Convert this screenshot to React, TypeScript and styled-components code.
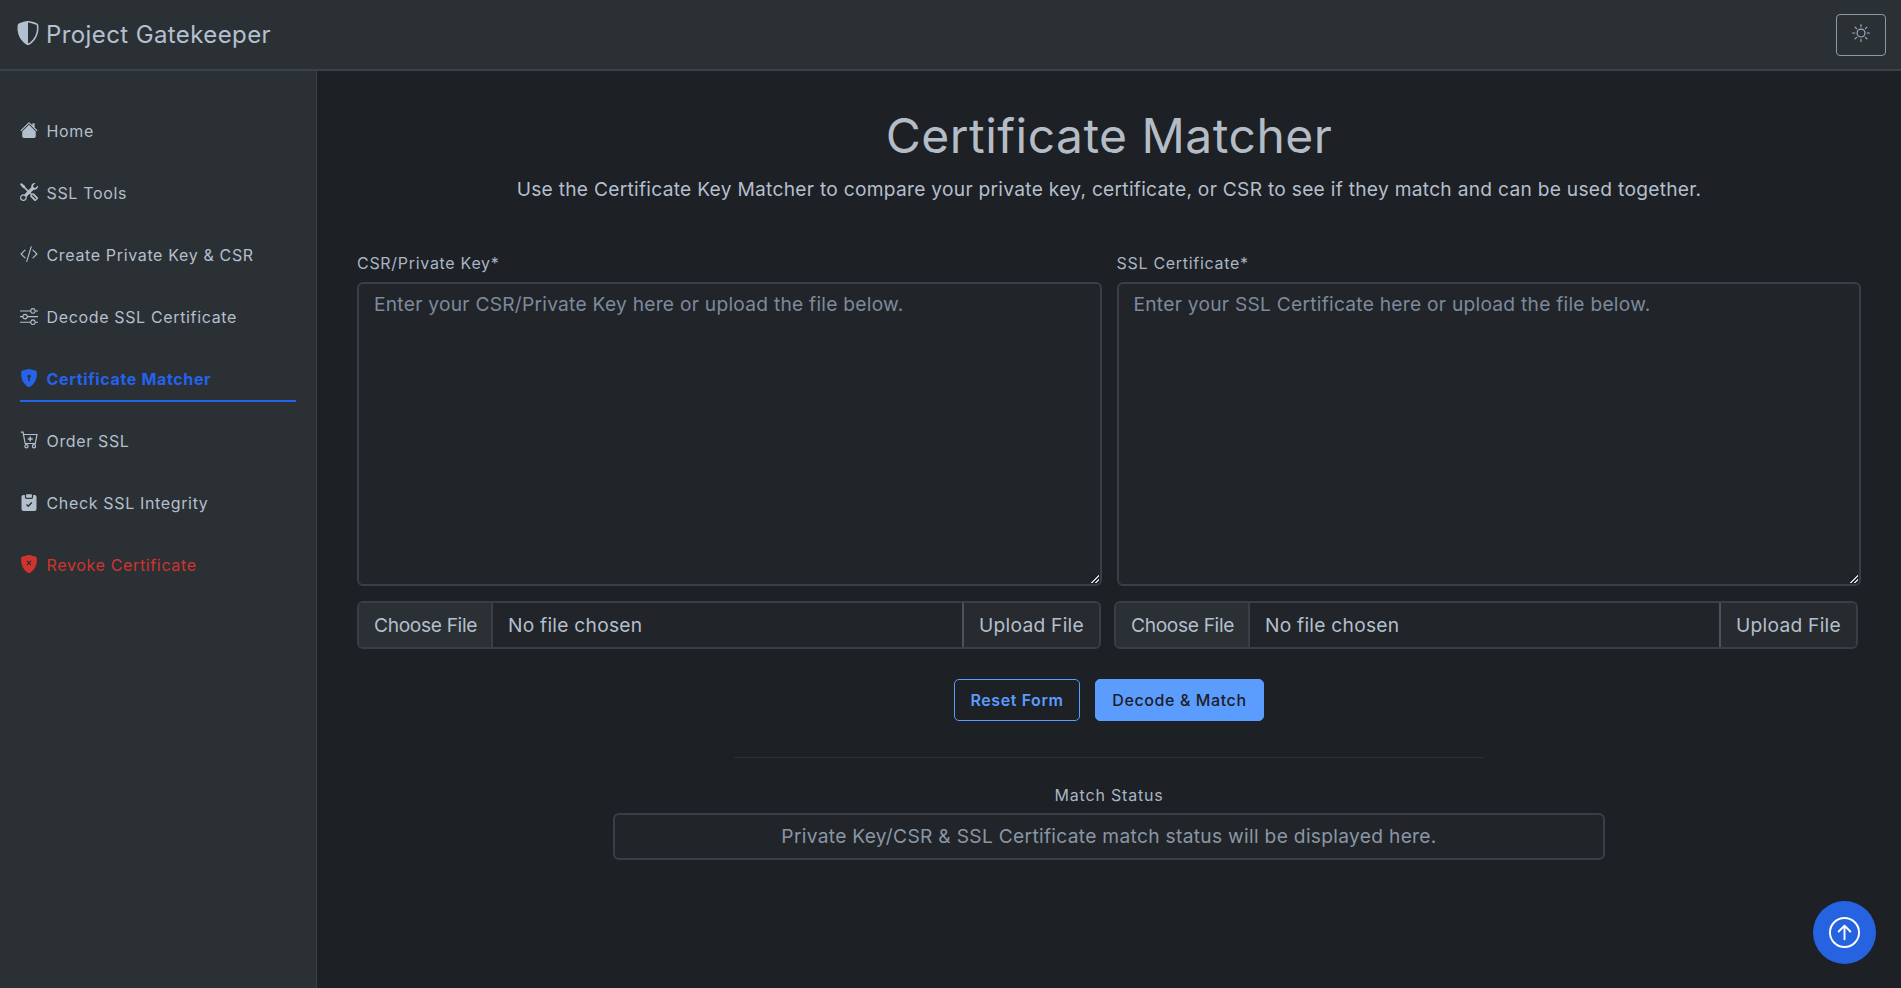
import styled, { createGlobalStyle } from 'styled-components';
import {
  BsArrowUpCircle,
  BsCodeSlash,
  BsHouseFill,
  BsShieldFillX,
  BsShieldLockFill,
  BsShieldShaded,
  BsSliders,
  BsSun,
  BsTools,
} from 'react-icons/bs';

const GlobalStyle = createGlobalStyle`
  * { box-sizing: border-box; }
  html, body { margin: 0; height: 100%; overflow: hidden; }
  html { color-scheme: dark; }
  body {
    background: #1d2024;
    color: #b4bfcc;
    font-family: "Inter", "Liberation Sans", sans-serif;
    font-size: 16px;
  }
`;

const CartIcon = () => (
  <svg viewBox="0 0 18 18" fill="none" stroke="currentColor" strokeWidth="1.2">
    <path d="M0.8 1.2H3L5.2 12.5H15.3L17 3.5H3.5" />
    <path d="M10.2 5.5V10.5M7.7 8H12.7" strokeWidth="1.4" />
    <circle cx="6.5" cy="15.2" r="1.6" />
    <circle cx="14" cy="15.2" r="1.6" />
  </svg>
);

const ClipboardIcon = () => (
  <svg viewBox="0 0 18 18" fill="currentColor">
    <rect x="1.5" y="2" width="15" height="16" rx="2" />
    <rect x="5.5" y="0.7" width="7" height="4.6" rx="1" stroke="#2b3035" strokeWidth="1.2" />
    <path d="M6.5 11.5L8.3 13.2L11.8 9.5" fill="none" stroke="#2b3035" strokeWidth="1.4" />
  </svg>
);

const navItems = [
  { label: 'Home', icon: <BsHouseFill /> },
  { label: 'SSL Tools', icon: <BsTools /> },
  { label: 'Create Private Key & CSR', icon: <BsCodeSlash /> },
  { label: 'Decode SSL Certificate', icon: <BsSliders /> },
  { label: 'Certificate Matcher', icon: <BsShieldLockFill />, tone: 'active' },
  { label: 'Order SSL', icon: <CartIcon /> },
  { label: 'Check SSL Integrity', icon: <ClipboardIcon /> },
  { label: 'Revoke Certificate', icon: <BsShieldFillX />, tone: 'danger' },
];

const App = () => {
  return (
    <Page>
      <GlobalStyle />
      <Header>
        <Brand>
          <BsShieldShaded />
          <span>Project Gatekeeper</span>
        </Brand>
        <ThemeButton aria-label="Toggle theme">
          <BsSun />
        </ThemeButton>
      </Header>
      <Body>
        <Sidebar>
          {navItems.map((item) => (
            <NavItem key={item.label} $tone={item.tone}>
              {item.icon}
              <span>{item.label}</span>
            </NavItem>
          ))}
        </Sidebar>
        <Main>
          <Title>Certificate Matcher</Title>
          <Lead>
            Use the Certificate Key Matcher to compare your private key, certificate, or CSR to see if they match and can be used together.
          </Lead>
          <Fields>
            <Field>
              <Label htmlFor="csr">CSR/Private Key*</Label>
              <TextArea id="csr" placeholder="Enter your CSR/Private Key here or upload the file below." />
            </Field>
            <Field>
              <Label htmlFor="cert">SSL Certificate*</Label>
              <TextArea id="cert" placeholder="Enter your SSL Certificate here or upload the file below." />
            </Field>
          </Fields>
          <UploadRows>
            <UploadGroup>
              <ChooseButton>Choose File</ChooseButton>
              <FileName>No file chosen</FileName>
              <UploadButton>Upload File</UploadButton>
            </UploadGroup>
            <UploadGroup>
              <ChooseButton>Choose File</ChooseButton>
              <FileName>No file chosen</FileName>
              <UploadButton>Upload File</UploadButton>
            </UploadGroup>
          </UploadRows>
          <Actions>
            <ResetButton>Reset Form</ResetButton>
            <SubmitButton>Decode &amp; Match</SubmitButton>
          </Actions>
          <Divider />
          <StatusLabel>Match Status</StatusLabel>
          <StatusBox>Private Key/CSR &amp; SSL Certificate match status will be displayed here.</StatusBox>
        </Main>
      </Body>
      <ScrollTop aria-label="Scroll to top">
        <BsArrowUpCircle />
      </ScrollTop>
    </Page>
  );
};
export default App;

const Page = styled.div`
  height: 100vh;
  display: flex;
  flex-direction: column;
`;

const Header = styled.header`
  height: 71px;
  flex: none;
  display: flex;
  align-items: center;
  justify-content: space-between;
  padding: 0 15px 0 16px;
  background: #2b3035;
  border-bottom: 2px solid #3a4147;
`;

const Brand = styled.div`
  display: flex;
  align-items: center;
  gap: 6px;
  font-size: 24px;
  letter-spacing: 0.4px;
  color: #b4c0d0;
  svg { width: 24px; height: 24px; margin-top: -3px; }
`;

const ThemeButton = styled.button`
  width: 50px;
  height: 42px;
  padding: 0;
  display: flex;
  align-items: center;
  justify-content: center;
  background: transparent;
  border: 1px solid #8d99a8;
  border-radius: 4px;
  color: #9fb0c4;
  svg { width: 18px; height: 18px; margin-top: -3px; }
`;

const Body = styled.div`
  flex: 1;
  display: flex;
  min-height: 0;
`;

const Sidebar = styled.nav`
  width: 317px;
  flex: none;
  padding: 41px 20px 0 20px;
  background: #2b3035;
  border-right: 1px solid #3a4147;
  display: flex;
  flex-direction: column;
  gap: 20px;
`;

const NavItem = styled.a<{ $tone?: string }>`
  height: 42px;
  display: flex;
  align-items: center;
  gap: 8.5px;
  font-size: 16px;
  letter-spacing: 0.65px;
  padding-bottom: 2px;
  color: ${(p) => (p.$tone === 'active' ? '#2563eb' : p.$tone === 'danger' ? '#d0342c' : '#b4bfcc')};
  font-weight: ${(p) => (p.$tone === 'active' ? 700 : 400)};
  border-bottom: 2px solid ${(p) => (p.$tone === 'active' ? '#2563eb' : 'transparent')};
  svg { width: 18px; height: 18px; flex: none; margin-top: -3px; }
`;

const Main = styled.main`
  flex: 1;
  padding: 36px 40px 0 40px;
  display: flex;
  flex-direction: column;
  align-items: center;
`;

const Title = styled.h1`
  margin: 0;
  font-size: 48px;
  line-height: 58px;
  font-weight: 400;
  letter-spacing: 0.47px;
  color: #b4bcc6;
`;

const Lead = styled.p`
  margin: 10px 0 0;
  font-size: 19.2px;
  line-height: 29px;
  letter-spacing: 0.27px;
  color: #b4bfcc;
`;

const Fields = styled.div`
  width: 100%;
  margin-top: 47px;
  display: grid;
  grid-template-columns: 1fr 1fr;
  gap: 15px;
`;

const Field = styled.div`
  display: flex;
  flex-direction: column;
`;

const Label = styled.label`
  font-size: 16px;
  line-height: 24px;
  letter-spacing: 0.7px;
  margin-bottom: 7px;
  color: #a9b5c4;
`;

const TextArea = styled.textarea`
  display: block;
  width: 100%;
  height: 304px;
  padding: 6px 15px;
  font: inherit;
  font-size: 19.2px;
  line-height: 29px;
  letter-spacing: 0.25px;
  color: #b4bfcc;
  background: #212529;
  border: 2px solid #383f46;
  border-radius: 6px;
  outline: none;
  &::placeholder { color: #7d8a9c; opacity: 1; }
  &::-webkit-resizer {
    background: linear-gradient(135deg, #1d2024 44%, #d0d4d8 44% 58%, #1d2024 58% 72%, #d0d4d8 72% 86%, #1d2024 86%) right 1px bottom 1px / 8px 8px no-repeat;
  }
`;

const UploadRows = styled.div`
  width: 100%;
  margin-top: 15px;
  display: flex;
  gap: 13px;
`;

const UploadGroup = styled.div`
  width: 744px;
  height: 48px;
  display: flex;
  align-items: stretch;
  font-size: 19.2px;
  letter-spacing: 0.25px;
  color: #b4bfcc;
  background: #212529;
  border: 2px solid #383f46;
  border-radius: 6px;
`;

const ChooseButton = styled.div`
  display: flex;
  align-items: center;
  padding: 0 15px;
  width: 134px;
  white-space: nowrap;
  letter-spacing: -0.35px;
  background: #2b3035;
  border-right: 2px solid #383f46;
  border-radius: 4px 0 0 4px;
`;

const FileName = styled.div`
  flex: 1;
  display: flex;
  align-items: center;
  padding: 0 15px;
`;

const UploadButton = styled.div`
  display: flex;
  align-items: center;
  justify-content: center;
  width: 137px;
  white-space: nowrap;
  background: #272b30;
  border-left: 2px solid #4a525a;
  border-radius: 0 4px 4px 0;
`;

const Actions = styled.div`
  margin-top: 30px;
  display: flex;
  gap: 15px;
`;

const ResetButton = styled.button`
  height: 42px;
  width: 126px;
  padding: 0;
  font: inherit;
  font-size: 16px;
  font-weight: 600;
  letter-spacing: 0.6px;
  color: #5b9cff;
  background: transparent;
  border: 1px solid #5b9cff;
  border-radius: 5px;
`;

const SubmitButton = styled(ResetButton)`
  width: 169px;
  font-weight: 500;
  color: #1d2024;
  background: #5b9cff;
`;

const Divider = styled.hr`
  width: 750px;
  margin: 36px 0 0;
  border: 0;
  border-top: 1px solid #2b3035;
`;

const StatusLabel = styled.div`
  margin-top: 25px;
  font-size: 16px;
  line-height: 24px;
  letter-spacing: 0.8px;
  color: #a9b5c4;
`;

const StatusBox = styled.div`
  width: 992px;
  height: 47px;
  margin-top: 6px;
  padding-bottom: 2px;
  display: flex;
  align-items: center;
  justify-content: center;
  font-size: 19.2px;
  letter-spacing: 0.3px;
  color: #8a96a5;
  background: #212529;
  border: 2px solid #383f46;
  border-radius: 6px;
`;

const ScrollTop = styled.button`
  position: fixed;
  right: 25px;
  bottom: 24px;
  width: 63px;
  height: 63px;
  padding: 0;
  display: flex;
  align-items: center;
  justify-content: center;
  color: #fff;
  background: #2563e0;
  border: 0;
  border-radius: 50%;
  svg { width: 31px; height: 31px; }
`;
